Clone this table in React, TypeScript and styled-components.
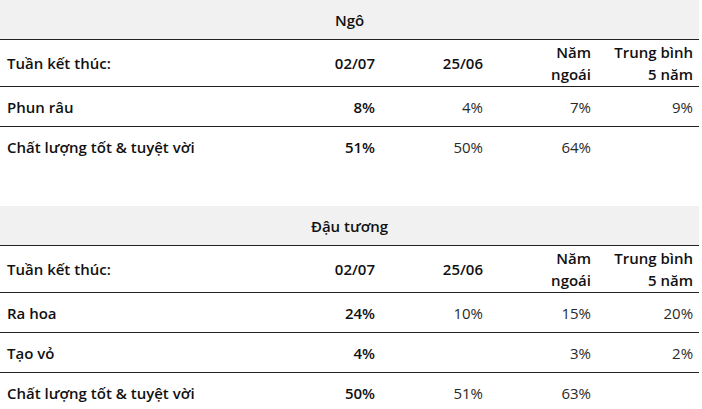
import React from "react";
import styled, { createGlobalStyle } from "styled-components";

type Row = {
  label: string;
  current: string;
  previous: string;
  lastYear: string;
  average: string;
};

type Section = {
  title: string;
  rows: Row[];
};

const sections: Section[] = [
  {
    title: "Ngô",
    rows: [
      { label: "Phun râu", current: "8%", previous: "4%", lastYear: "7%", average: "9%" },
      { label: "Chất lượng tốt & tuyệt vời", current: "51%", previous: "50%", lastYear: "64%", average: "" },
    ],
  },
  {
    title: "Đậu tương",
    rows: [
      { label: "Ra hoa", current: "24%", previous: "10%", lastYear: "15%", average: "20%" },
      { label: "Tạo vỏ", current: "4%", previous: "", lastYear: "3%", average: "2%" },
      { label: "Chất lượng tốt & tuyệt vời", current: "50%", previous: "51%", lastYear: "63%", average: "" },
    ],
  },
];

const GlobalStyle = createGlobalStyle`
  body {
    margin: 0;
    background: #fff;
    font-family: "Open Sans", "Liberation Sans", sans-serif;
    color: #111;
  }
`;

const Page = styled.div`
  width: 699px;
  display: flex;
  flex-direction: column;
  gap: 40px;
`;

const Table = styled.table`
  width: 699px;
  border-collapse: collapse;
  table-layout: fixed;
  font-size: 15px;
  line-height: 22px;
`;

const TitleCell = styled.th`
  height: 39px;
  padding: 0;
  background: #f1f1f1;
  text-align: center;
  font-weight: 600;
  color: #111;
  border-bottom: 1px solid #222;
`;

const HeadCell = styled.th<{ $left?: boolean }>`
  height: 46px;
  padding: 0 6px 0 7px;
  font-weight: 600;
  text-align: ${(p) => (p.$left ? "left" : "right")};
  vertical-align: middle;
  border-bottom: 1px solid #222;
  color: #111;
`;

const Cell = styled.td<{ $strong?: boolean; $left?: boolean }>`
  height: 39px;
  padding: 0 6px 0 7px;
  text-align: ${(p) => (p.$left ? "left" : "right")};
  font-weight: ${(p) => (p.$strong ? 600 : 400)};
  color: ${(p) => (p.$strong ? "#111" : "#2a2a2a")};
`;

const BodyRow = styled.tr`
  &:not(:last-child) td {
    border-bottom: 1px solid #222;
  }
`;

const CropTable = ({ section }: { section: Section }) => (
  <Table>
    <colgroup>
      <col style={{ width: 273 }} />
      <col style={{ width: 108 }} />
      <col style={{ width: 108 }} />
      <col style={{ width: 108 }} />
      <col style={{ width: 102 }} />
    </colgroup>
    <thead>
      <tr>
        <TitleCell colSpan={5}>{section.title}</TitleCell>
      </tr>
      <tr>
        <HeadCell $left>Tuần kết thúc:</HeadCell>
        <HeadCell>02/07</HeadCell>
        <HeadCell>25/06</HeadCell>
        <HeadCell>
          Năm
          <br />
          ngoái
        </HeadCell>
        <HeadCell>
          Trung bình
          <br />5 năm
        </HeadCell>
      </tr>
    </thead>
    <tbody>
      {section.rows.map((row) => (
        <BodyRow key={row.label}>
          <Cell $left $strong>
            {row.label}
          </Cell>
          <Cell $strong>{row.current}</Cell>
          <Cell>{row.previous}</Cell>
          <Cell>{row.lastYear}</Cell>
          <Cell>{row.average}</Cell>
        </BodyRow>
      ))}
    </tbody>
  </Table>
);

const App = () => (
  <>
    <GlobalStyle />
    <Page>
      {sections.map((s) => (
        <CropTable key={s.title} section={s} />
      ))}
    </Page>
  </>
);

export default App;
